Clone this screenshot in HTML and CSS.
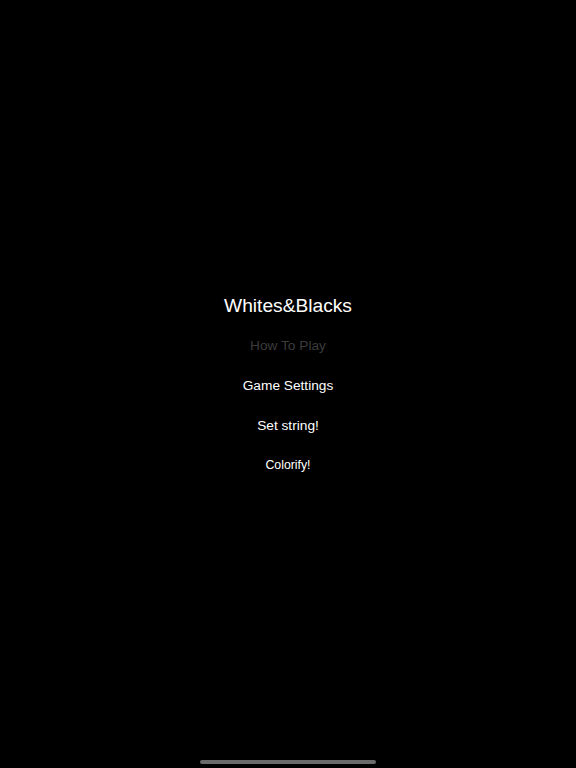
FILE: index.html
```html
<!DOCTYPE html>
<html>
<head>
<meta charset="utf-8">
<link rel="stylesheet" href="styles.css">
</head>
<body>
<div class="screen">
  <div class="menu">
    <div class="title">Whites&amp;Blacks</div>
    <div class="item disabled">How To Play</div>
    <div class="item">Game Settings</div>
    <div class="item">Set string!</div>
    <div class="item small">Colorify!</div>
  </div>
  <div class="home-bar"></div>
</div>
</body>
</html>
```
FILE: styles.css
```css
html, body {
  margin: 0;
  padding: 0;
  background: #000;
}
.screen {
  width: 576px;
  height: 768px;
  position: relative;
  background: #000;
  display: flex;
  flex-direction: column;
  align-items: center;
  font-family: "Liberation Sans", Arial, sans-serif;
  color: #fff;
}
.menu {
  margin-top: 286px;
  display: flex;
  flex-direction: column;
  align-items: center;
}
.title {
  font-size: 19.2px;
  height: 40px;
  line-height: 40px;
}
.item {
  font-size: 13.7px;
  height: 40px;
  line-height: 40px;
}
.item.disabled {
  color: #3c3c3c;
}
.item.small {
  font-size: 12.3px;
  height: 38px;
  line-height: 38px;
}
.home-bar {
  position: absolute;
  left: 200px;
  top: 760px;
  width: 176px;
  height: 4px;
  border-radius: 2px;
  background: #6a6a6a;
}
```
